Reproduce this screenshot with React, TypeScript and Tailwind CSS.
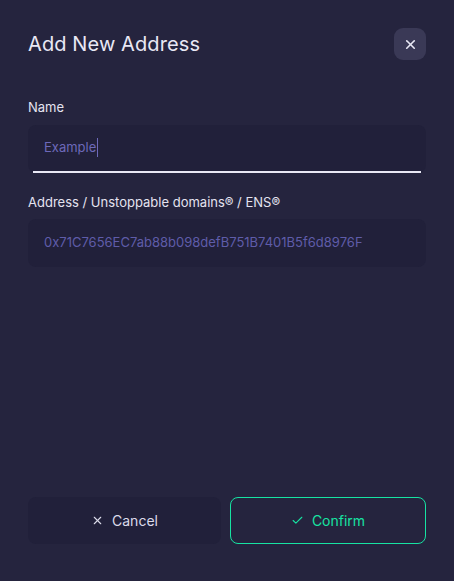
import { X, Check } from 'lucide-react'

const FONT = "font-['Inter','Liberation_Sans',sans-serif]"

export default function App() {
  return (
    <div className={`flex h-[581px] w-[454px] flex-col bg-[#25243e] px-7 pb-[37px] pt-7 ${FONT}`}>
      {/* 标题 + 关闭 */}
      <div className="flex items-center justify-between">
        <h1 className="text-[20px] font-normal tracking-[0.1px] text-[#e9e8f5]">Add New Address</h1>
        <button className="grid size-8 place-items-center rounded-[9px] bg-[#3a3956] text-[#e9e8f5]">
          <X size={15} strokeWidth={2.6} />
        </button>
      </div>

      {/* 表单 */}
      <div className="mt-[38px] flex flex-col">
        <label className="text-[13px] text-[#e4e3f0]">Name</label>
        <div className="mt-[7px] flex h-12 flex-col rounded-lg bg-[#21203a]">
          <div className="flex flex-1 items-center px-4">
            <span className="text-[13px] text-[#6d69b9]">Example</span>
            <span className="ml-px h-[19px] w-px bg-[#6d69b9]" />
          </div>
          <div className="mx-[5px] h-[1.5px] bg-[#e9e8f5]" />
        </div>

        <label className="mt-5 text-[13px] text-[#e4e3f0]">Address / Unstoppable domains® / ENS®</label>
        <div className="mt-[7px] flex h-12 items-center rounded-lg bg-[#21203a] px-4">
          <span className="text-[13px] text-[#5f5ca9]">0x71C7656EC7ab88b098defB751B7401B5f6d8976F</span>
        </div>
      </div>

      {/* 底部按钮 */}
      <div className="mt-auto flex gap-[9px]">
        <button className="flex h-[47px] w-[193px] items-center justify-center gap-2 rounded-lg bg-[#21203a] text-[14px] text-[#dcdbea]">
          <X size={13} strokeWidth={2} />
          Cancel
        </button>
        <button className="flex h-[47px] flex-1 items-center justify-center gap-2 rounded-lg border border-[#17e3a2] text-[14px] text-[#17e3a2]">
          <Check size={13} strokeWidth={2} />
          Confirm
        </button>
      </div>
    </div>
  )
}
